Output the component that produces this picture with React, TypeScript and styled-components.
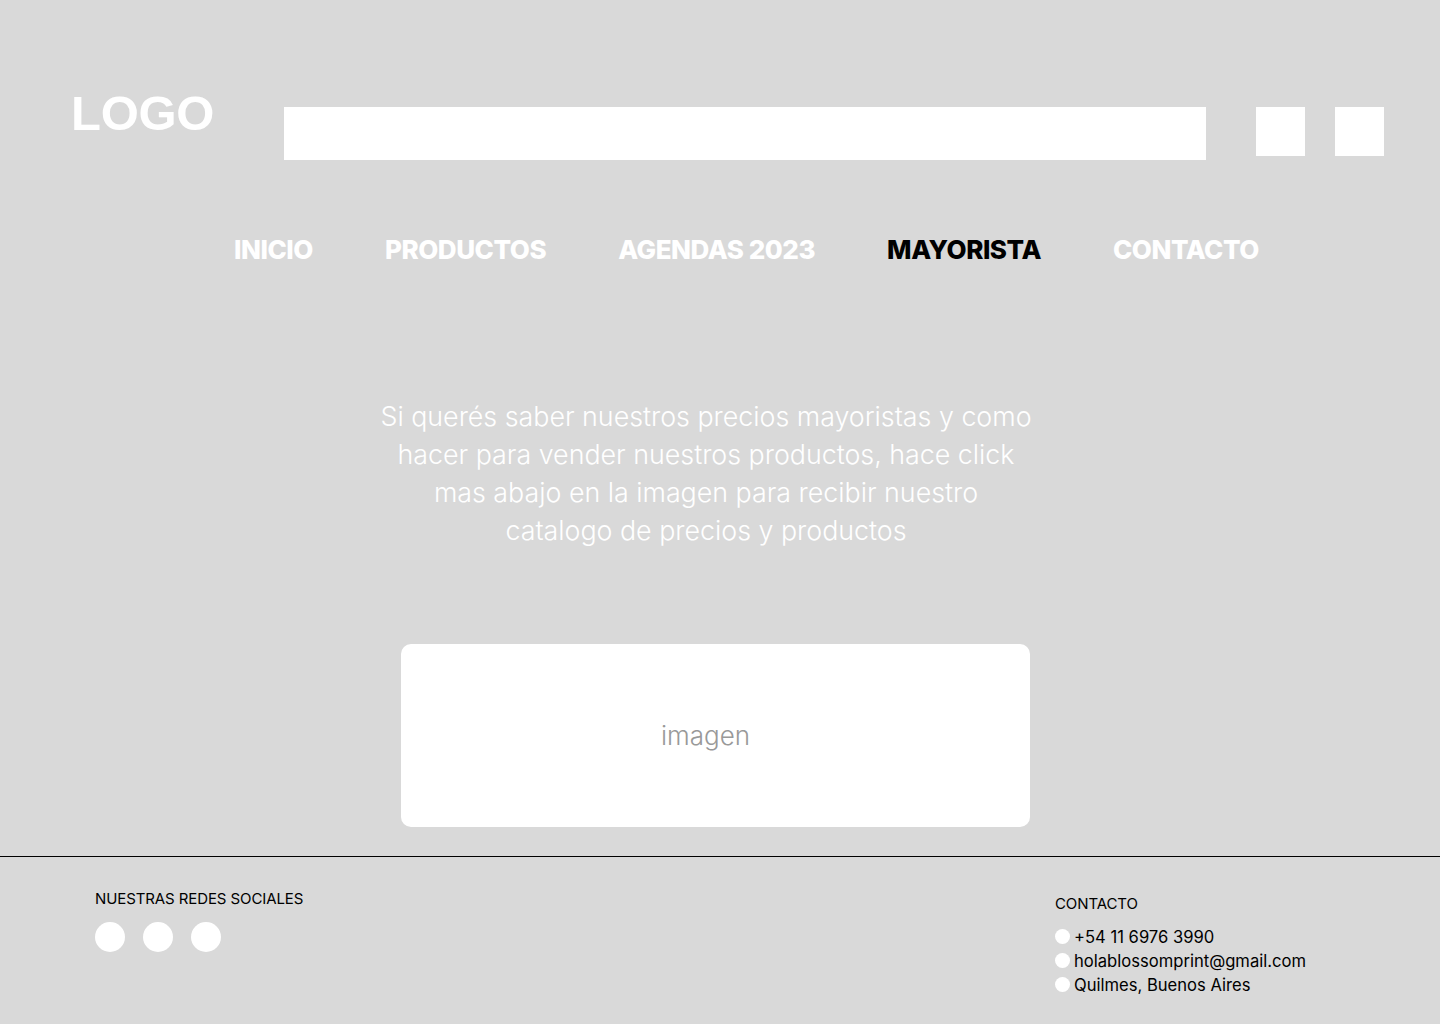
import React from "react";
import styled, { createGlobalStyle } from "styled-components";

const Global = createGlobalStyle`
  html, body { margin: 0; padding: 0; background: #d9d9d9; }
  body { font-family: Inter, "Noto Sans", sans-serif; }
  * { box-sizing: border-box; }
`;

const Page = styled.div`
  width: 1440px;
  height: 1024px;
  background: #d9d9d9;
  display: flex;
  flex-direction: column;
  overflow: hidden;
`;

const Header = styled.header`
  display: flex;
  align-items: flex-start;
  padding: 89px 56px 0 71px;
`;

const Logo = styled.div`
  width: 213px;
  font-family: "Liberation Sans", Arial, sans-serif;
  font-weight: 700;
  font-size: 49px;
  line-height: 1;
  color: #fff;
  letter-spacing: -0.3px;
`;

const Search = styled.div`
  flex: 1;
  height: 53px;
  margin-top: 18px;
  background: #fff;
`;

const IconBox = styled.div<{ $gap: number }>`
  width: 49px;
  height: 49px;
  margin-top: 18px;
  margin-left: ${(p) => p.$gap}px;
  background: #fff;
`;

const Nav = styled.nav`
  display: flex;
  gap: 72px;
  padding-left: 234px;
  margin-top: 73px;
`;

const NavItem = styled.a<{ $active?: boolean }>`
  font-family: Inter, sans-serif;
  font-weight: 800;
  font-size: 26px;
  line-height: 34px;
  letter-spacing: -0.45px;
  color: ${(p) => (p.$active ? "#000" : "#fff")};
  text-decoration: none;
`;

const Intro = styled.p`
  width: 700px;
  margin: 130px 0 0 356px;
  text-align: center;
  font-family: Inter, sans-serif;
  font-weight: 300;
  font-size: 26.8px;
  line-height: 38px;
  color: #fff;
`;

const ImageBox = styled.div`
  width: 629px;
  height: 183px;
  margin: 95px 0 0 401px;
  background: #fff;
  border-radius: 10px;
  display: flex;
  align-items: center;
  justify-content: center;
  padding-right: 20px;
  font-family: Inter, sans-serif;
  font-weight: 300;
  font-size: 26px;
  color: #999;
`;

const Footer = styled.footer`
  margin-top: 29px;
  border-top: 1px solid #000;
  flex: 1;
  display: flex;
  justify-content: space-between;
  padding: 32px 124px 0 95px;
  font-family: Inter, sans-serif;
  color: #000;
`;

const FooterCol = styled.div<{ $top?: number }>`
  display: flex;
  flex-direction: column;
  margin-top: ${(p) => p.$top ?? 0}px;
`;

const FooterTitle = styled.div`
  font-size: 15px;
  line-height: 20px;
  font-weight: 400;
  letter-spacing: -0.1px;
`;

const Socials = styled.div`
  display: flex;
  gap: 18px;
  margin-top: 13px;
`;

const Social = styled.span`
  width: 30px;
  height: 30px;
  border-radius: 50%;
  background: #fff;
`;

const ContactList = styled.ul`
  list-style: none;
  margin: 11px 0 0;
  padding: 0;
  width: 261px;
`;

const ContactItem = styled.li`
  display: flex;
  align-items: center;
  gap: 4px;
  font-size: 16.6px;
  line-height: 24px;
`;

const Dot = styled.span`
  width: 15px;
  height: 15px;
  border-radius: 50%;
  background: #fff;
  flex-shrink: 0;
  margin-top: -2px;
`;

export default function App() {
  return (
    <Page>
      <Global />
      <Header>
        <Logo>LOGO</Logo>
        <Search />
        <IconBox $gap={50} />
        <IconBox $gap={30} />
      </Header>
      <Nav>
        <NavItem href="#">INICIO</NavItem>
        <NavItem href="#">PRODUCTOS</NavItem>
        <NavItem href="#">AGENDAS 2023</NavItem>
        <NavItem href="#" $active>MAYORISTA</NavItem>
        <NavItem href="#">CONTACTO</NavItem>
      </Nav>
      <Intro>
        Si querés saber nuestros precios mayoristas y como
        <br />
        hacer para vender nuestros productos, hace click
        <br />
        mas abajo en la imagen para recibir nuestro
        <br />
        catalogo de precios y productos
      </Intro>
      <ImageBox>imagen</ImageBox>
      <Footer>
        <FooterCol>
          <FooterTitle>NUESTRAS REDES SOCIALES</FooterTitle>
          <Socials>
            <Social />
            <Social />
            <Social />
          </Socials>
        </FooterCol>
        <FooterCol $top={5}>
          <FooterTitle>CONTACTO</FooterTitle>
          <ContactList>
            <ContactItem><Dot />+54 11 6976 3990</ContactItem>
            <ContactItem><Dot />holablossomprint@gmail.com</ContactItem>
            <ContactItem><Dot />Quilmes, Buenos Aires</ContactItem>
          </ContactList>
        </FooterCol>
      </Footer>
    </Page>
  );
}
